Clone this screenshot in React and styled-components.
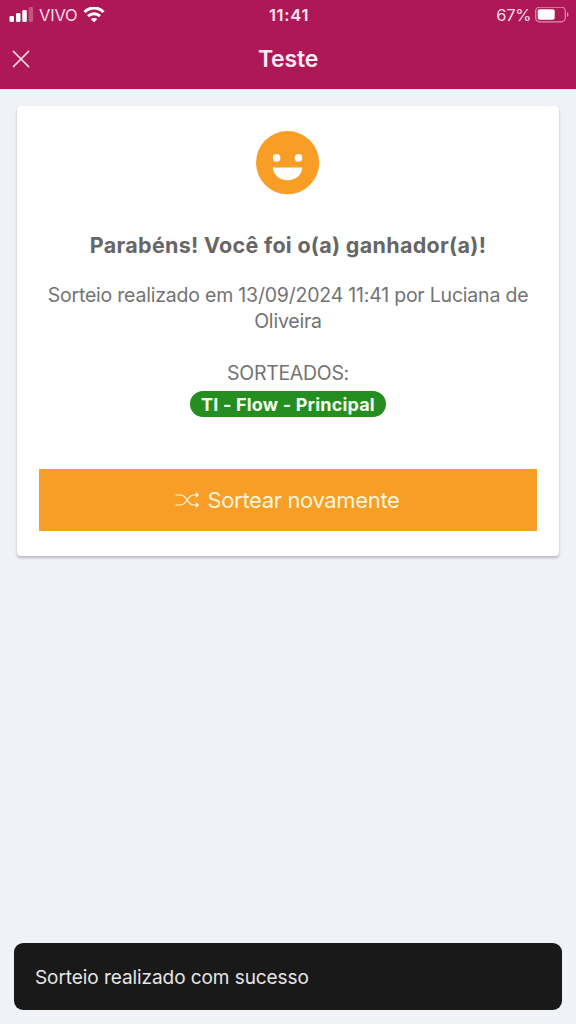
import React from 'react';
import styled, { createGlobalStyle } from 'styled-components';

const GlobalStyle = createGlobalStyle`
  * {
    box-sizing: border-box;
  }

  body {
    margin: 0;
    background-color: #f0f2f8;
    font-family: Inter, 'Liberation Sans', sans-serif;
  }
`;

const Screen = styled.div`
  position: relative;
  display: flex;
  flex-direction: column;
  height: 100vh;
  width: 100%;
  overflow: hidden;
  background-color: #f0f2f8;
`;

const Header = styled.header`
  height: 89px;
  flex-shrink: 0;
  color: #ffffff;
  background-color: #af1856;
`;

const StatusBar = styled.div`
  display: grid;
  grid-template-columns: 1fr auto 1fr;
  align-items: center;
  height: 30px;
  padding: 0 7px 0 9px;
  font-size: 16.5px;
  line-height: 30px;
  color: #fbdcea;
`;

const StatusGroup = styled.div`
  display: flex;
  align-items: center;
  justify-content: ${({ $end }) => ($end ? 'flex-end' : 'flex-start')};
  gap: ${({ $gap }) => $gap}px;
  height: 28px;
`;

const Carrier = styled.span`
  letter-spacing: -0.2px;
`;

const Percent = styled.span`
  letter-spacing: -0.35px;
`;

const Clock = styled.span`
  font-weight: 600;
  font-size: 16.5px;
  letter-spacing: 0.7px;
  color: #ffeaf4;
`;

const Toolbar = styled.div`
  display: grid;
  grid-template-columns: 42px 1fr 42px;
  align-items: center;
  height: 57px;
`;

const CloseButton = styled.button`
  display: flex;
  justify-content: center;
  padding: 0;
  border: 0;
  color: #fbdcea;
  background: none;
`;

const Title = styled.h1`
  margin: 0;
  font-size: 23px;
  font-weight: 600;
  line-height: 30px;
  letter-spacing: -0.2px;
  text-align: center;
  color: #ffeaf4;
`;

const Card = styled.main`
  display: flex;
  flex-direction: column;
  align-items: center;
  height: 450px;
  margin: 17px 17px 0;
  padding: 25px 22px;
  border-radius: 4px;
  text-align: center;
  color: #737373;
  background-color: #ffffff;
  box-shadow: 0 2px 3px rgba(0, 0, 0, 0.24);
`;

const Heading = styled.h2`
  margin: 35px 0 0;
  font-size: 21.5px;
  font-weight: 700;
  line-height: 30px;
  letter-spacing: 0.3px;
  white-space: nowrap;
  color: #666666;
`;

const Description = styled.p`
  width: 498px;
  margin: 22px 0 0;
  font-size: 19.5px;
  line-height: 26px;
  letter-spacing: -0.21px;
`;

const Label = styled.span`
  margin-top: 26px;
  font-size: 19.5px;
  line-height: 26px;
  letter-spacing: -0.3px;
`;

const Badge = styled.span`
  width: 196px;
  height: 26px;
  margin-top: 5px;
  border-radius: 13px;
  font-size: 18px;
  font-weight: 700;
  line-height: 27px;
  letter-spacing: 0.18px;
  white-space: nowrap;
  color: #f5fff0;
  background-color: #258e20;
`;

const DrawButton = styled.button`
  display: flex;
  align-items: center;
  justify-content: center;
  gap: 8px;
  width: 498px;
  height: 62px;
  margin-top: 52px;
  padding: 0 2px 0 0;
  border: 0;
  font-family: inherit;
  font-size: 22px;
  letter-spacing: -0.36px;
  color: #fff5d8;
  background-color: #f89d25;
`;

const Toast = styled.div`
  position: absolute;
  right: 14px;
  bottom: 14px;
  left: 14px;
  height: 67px;
  padding: 0 21px;
  border-radius: 9px;
  font-size: 19px;
  line-height: 69px;
  letter-spacing: -0.07px;
  color: #e6e6e6;
  background-color: #191919;
`;

const SignalIcon = () => (
  <svg width="24" height="16" viewBox="0 0 24 16" fill="#ffffff">
    <rect x="0.5" y="9" width="4.5" height="6" rx="1.3" />
    <rect x="7" y="6" width="4.5" height="9" rx="1.3" />
    <rect x="13.3" y="3" width="4.5" height="12" rx="1.3" />
    <rect x="19.7" y="0" width="4.3" height="15" rx="1.3" opacity="0.27" />
  </svg>
);

const WifiIcon = () => (
  <svg width="22" height="16" viewBox="0 0 22 16" fill="none" stroke="#ffffff">
    <path d="M1.5 5C6.8 -0.3 15.2 -0.3 20.5 5" strokeWidth="3.1" />
    <path d="M5 9.1C8.3 6 13.7 6 17 9.1" strokeWidth="2.9" />
    <path d="M11 15.2L7.7 12.1C9.5 10.5 12.5 10.5 14.3 12.1Z" fill="#ffffff" stroke="none" />
  </svg>
);

const BatteryIcon = () => (
  <svg width="34" height="16" viewBox="0 0 34 16">
    <rect x="0.7" y="0.2" width="29.6" height="14.6" rx="3.8" fill="none" stroke="#e58db0" strokeWidth="1.2" />
    <rect x="2.7" y="2.2" width="17" height="10.6" rx="2" fill="#ffffff" />
    <path d="M32 5C34 6 34 9 32 10Z" fill="#e58db0" />
  </svg>
);

const CloseIcon = () => (
  <svg width="18" height="18" viewBox="0 0 18 18" fill="none" stroke="currentColor" strokeWidth="1.5" strokeLinecap="round">
    <path d="M1.4 1.4L16.6 16.6M16.6 1.4L1.4 16.6" />
  </svg>
);

const SmileIcon = () => (
  <svg width="64" height="64" viewBox="0 0 64 64">
    <circle cx="31.6" cy="31.7" r="31.6" fill="#f89d25" />
    <circle cx="20.6" cy="26.9" r="3.8" fill="#ffffff" />
    <circle cx="42.5" cy="26.9" r="3.8" fill="#ffffff" />
    <path d="M16.7 36.4H46.4C45.5 44 39.7 49.2 31.6 49.2S17.7 44 16.7 36.4Z" fill="#ffffff" />
  </svg>
);

const ShuffleIcon = () => (
  <svg width="25" height="18" viewBox="0 0 25 18" fill="none" stroke="currentColor" strokeWidth="1.2">
    <path d="M0.5 4H5.5C8 4 9.5 5.5 11 7.5L14.5 12C15.7 13.4 16.7 14 18.5 14H23" />
    <path d="M0.5 14H5.5C8 14 9.5 12.5 11 10.5L14.5 6C15.7 4.6 16.7 4 18.5 4H23" />
    <path d="M20.8 0.9L24.2 4L20.8 7.1ZM20.8 10.9L24.2 14L20.8 17.1Z" fill="currentColor" stroke="none" />
  </svg>
);

const App = () => (
  <Screen>
    <GlobalStyle />
    <Header>
      <StatusBar>
        <StatusGroup $gap={6}>
          <SignalIcon />
          <Carrier>VIVO</Carrier>
          <WifiIcon />
        </StatusGroup>
        <Clock>11:41</Clock>
        <StatusGroup $end $gap={4}>
          <Percent>67%</Percent>
          <BatteryIcon />
        </StatusGroup>
      </StatusBar>
      <Toolbar>
        <CloseButton aria-label="Fechar">
          <CloseIcon />
        </CloseButton>
        <Title>Teste</Title>
      </Toolbar>
    </Header>
    <Card>
      <SmileIcon />
      <Heading>Parabéns! Você foi o(a) ganhador(a)!</Heading>
      <Description>Sorteio realizado em 13/09/2024 11:41 por Luciana de Oliveira</Description>
      <Label>SORTEADOS:</Label>
      <Badge>TI - Flow - Principal</Badge>
      <DrawButton>
        <ShuffleIcon />
        Sortear novamente
      </DrawButton>
    </Card>
    <Toast>Sorteio realizado com sucesso</Toast>
  </Screen>
);

export default App;
